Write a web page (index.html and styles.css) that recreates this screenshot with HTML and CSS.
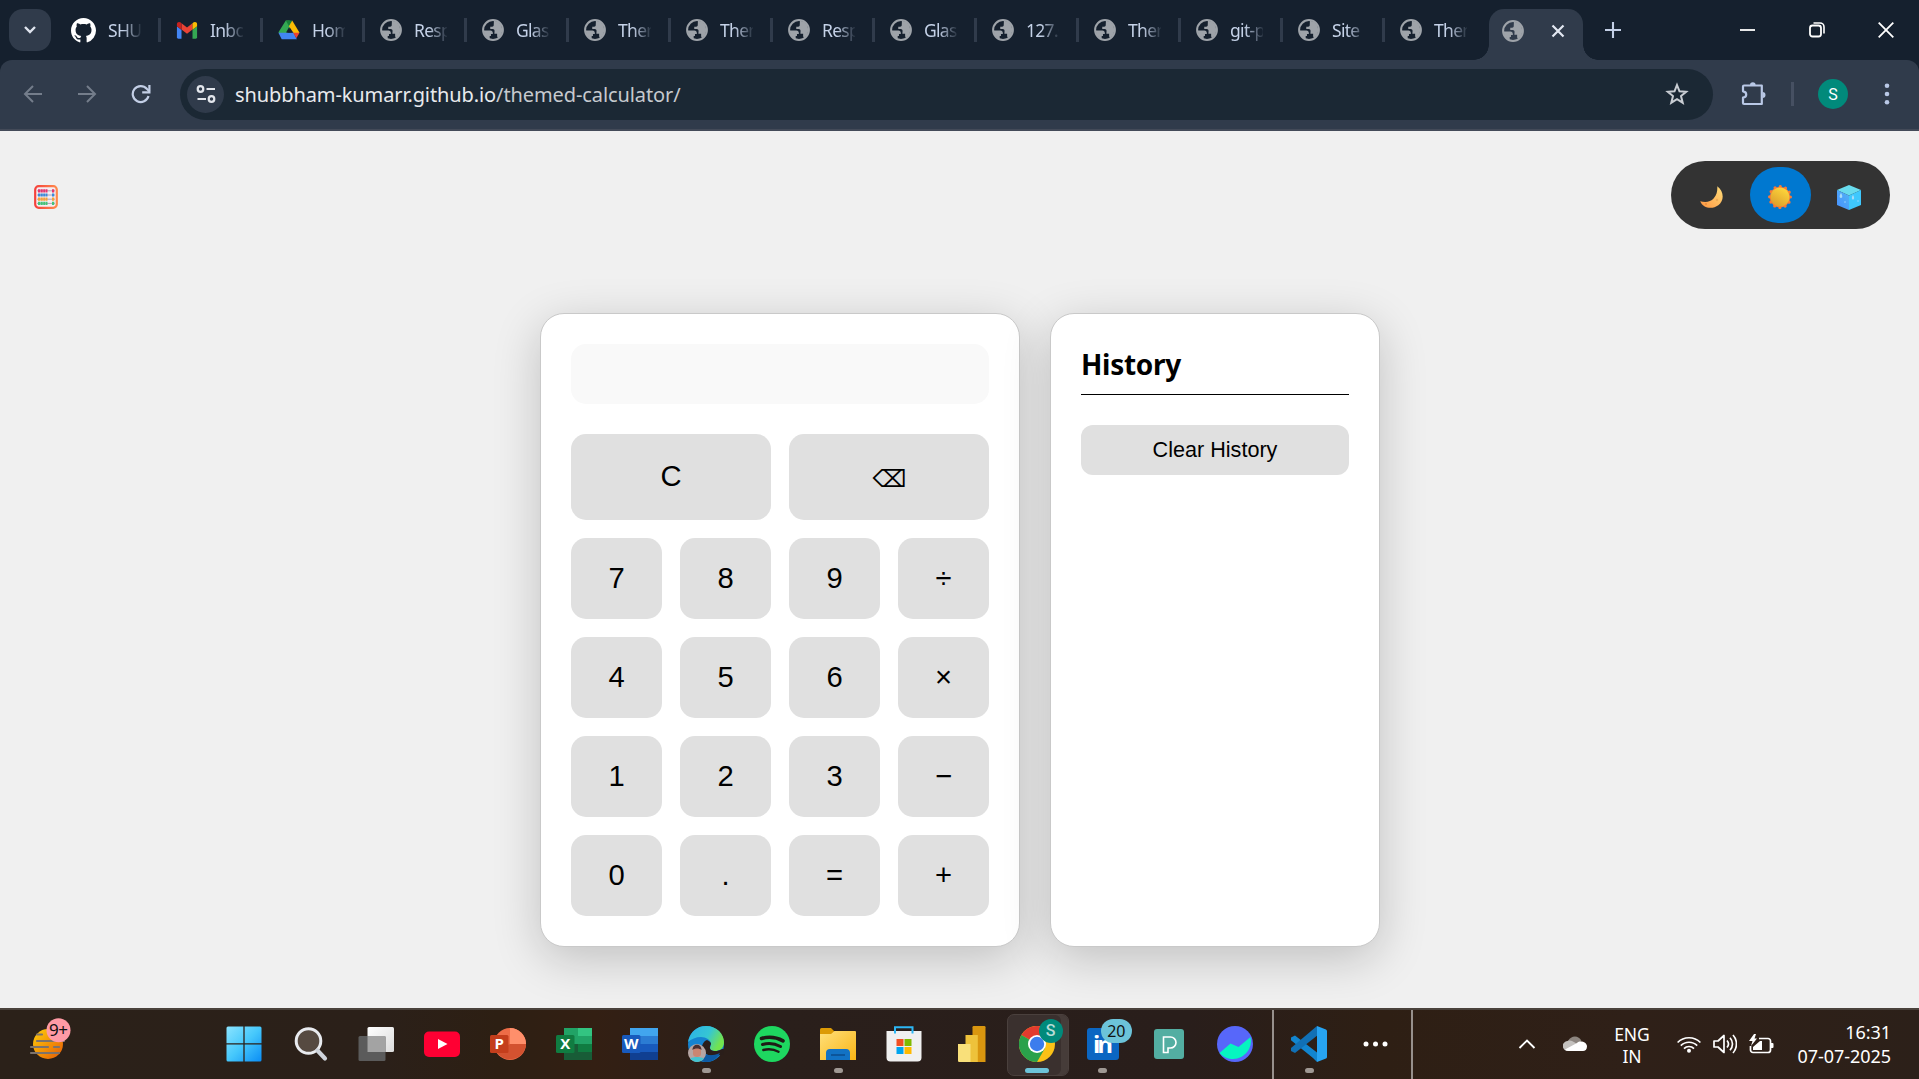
FILE: index.html
```html
<!DOCTYPE html>
<html lang="en">
<head>
<meta charset="utf-8">
<title>Themed Calculator</title>
<link rel="stylesheet" href="styles.css">
</head>
<body>
<svg class="defs" width="0" height="0" aria-hidden="true">
  <defs>
    <symbol id="globe" viewBox="0 0 24 24">
      <circle cx="12" cy="12" r="10.800" fill="none" stroke="#9ea3a9" stroke-width="2.200"/>
      <path d="M2 12.500h7.200c1.600 0 2.600 1.100 2.600 2.600v1.200h-2v2.200H8.400v3.200C4.500 20 2 16.600 2 12.500zM13 2l3.500.8C20 4.500 22 8 22 12c0 3.200-1.500 6.200-3.800 8l-1.700-.6v-3.300h-3l.2-3.100c.1-1.200-.8-2.200-2-2.200H9V8.500h2.100c1 0 1.700-.7 1.700-1.600z" fill="#9ea3a9"/>
    </symbol>
    <linearGradient id="gWin" x1="0" y1="0" x2="1" y2="1"><stop offset="0" stop-color="#8be4ff"/><stop offset=".5" stop-color="#46c8fc"/><stop offset="1" stop-color="#0a8df5"/></linearGradient>
    <linearGradient id="gMoon" x1="0" y1="1" x2="1" y2="0"><stop offset="0" stop-color="#ff9540"/><stop offset="1" stop-color="#ffdf7c"/></linearGradient>
    <linearGradient id="gSun" x1=".8" y1="0" x2=".2" y2="1"><stop offset="0" stop-color="#ffda3c"/><stop offset="1" stop-color="#dc9c2c"/></linearGradient>
    <linearGradient id="gAba" x1="0" y1="0" x2="1" y2="0"><stop offset="0" stop-color="#f5413b"/><stop offset="1" stop-color="#ff8a4d"/></linearGradient>
    <linearGradient id="gGlobe" x1="0" y1="0" x2="1" y2="1"><stop offset="0" stop-color="#ffcf0a"/><stop offset="1" stop-color="#e55a05"/></linearGradient>
    <linearGradient id="gEdge" x1="0" y1="0" x2="1" y2=".4"><stop offset="0" stop-color="#2cb0e8"/><stop offset=".6" stop-color="#35c6d4"/><stop offset="1" stop-color="#72e34f"/></linearGradient>
    <linearGradient id="gFolder" x1="0" y1="0" x2="1" y2="1"><stop offset="0" stop-color="#ffe07a"/><stop offset="1" stop-color="#f9b515"/></linearGradient>
    <linearGradient id="gPane" x1="0" y1="0" x2="1" y2="1"><stop offset="0" stop-color="#fff"/><stop offset="1" stop-color="#dcdcdc"/></linearGradient>
    <linearGradient id="gIce" x1="1" y1="0" x2="0" y2="1"><stop offset="0" stop-color="#52b4f4"/><stop offset="1" stop-color="#4690ff"/></linearGradient>
  </defs>
</svg>

<header class="browser">
  <div class="tabstrip">
    <button class="tab-search" aria-label="Search tabs"><svg width="14" height="10" viewBox="0 0 14 10"><path d="M2 2l5 5 5-5" fill="none" stroke="#dfe4ee" stroke-width="2.400"/></svg></button>
    <nav class="tabs">
      <div class="tab tab-first"><svg class="fav fav-git" viewBox="0 0 16 16"><path fill="#fff" d="M8 0C3.580 0 0 3.580 0 8c0 3.540 2.290 6.530 5.470 7.590.4.07.55-.17.55-.38 0-.19-.01-.82-.01-1.490-2.010.37-2.530-.49-2.690-.94-.09-.23-.48-.94-.82-1.130-.28-.15-.68-.52-.01-.53.63-.01 1.080.58 1.230.82.72 1.210 1.870.87 2.330.66.07-.52.28-.87.51-1.070-1.780-.2-3.640-.89-3.640-3.950 0-.87.31-1.590.82-2.150-.08-.2-.36-1.020.08-2.120 0 0 .67-.21 2.200.82.64-.18 1.320-.27 2-.27s1.360.09 2 .27c1.530-1.040 2.200-.82 2.200-.82.44 1.100.16 1.920.08 2.120.51.56.82 1.270.82 2.150 0 3.070-1.870 3.750-3.650 3.950.29.25.54.73.54 1.480 0 1.070-.01 1.930-.01 2.200 0 .21.15.46.55.38A8.010 8.010 0 0 0 16 8c0-4.420-3.580-8-8-8z"/></svg><span class="tab-title">SHUBH</span></div>
      <div class="tab"><svg class="fav" viewBox="0 0 24 24"><path fill="#4285f4" d="M1 8l5 4v9.500H2.500A1.500 1.500 0 0 1 1 20z"/><path fill="#34a853" d="M18 12l5-4v12a1.500 1.500 0 0 1-1.500 1.500H18z"/><path fill="#ea4335" d="M6 4.500l6 4.700 6-4.700v7L12 16l-6-4.500z"/><path fill="#c5221f" d="M1 5.500C1 3 4 2.300 6 4.500v7.300L1 8z"/><path fill="#fbbc04" d="M18 4.500c2-2.200 5-1.500 5 1V8l-5 3.800z"/></svg><span class="tab-title">Inbox</span></div>
      <div class="tab"><svg class="fav" viewBox="0 0 24 24"><path fill="#34a853" d="M8.500 1.500h4.200L15 6.500 6 22 .5 14.500z"/><path fill="#188038" d="M8.500 1.500h7L12 8z"/><path fill="#fbbc04" d="M15.500 1.500L23.500 15l-6 1-5.500-8z"/><path fill="#4285f4" d="M6.500 15H17l3.500 7H4L.5 15z"/><path fill="#ea4335" d="M16.500 15h7l-3.500 6z"/><path fill="#15202e" d="M12 9l3.200 5.800H8.800z"/></svg><span class="tab-title">Home</span></div>
      <div class="tab"><svg class="fav"><use href="#globe"/></svg><span class="tab-title">Responsive</span></div>
      <div class="tab"><svg class="fav"><use href="#globe"/></svg><span class="tab-title">Glass</span></div>
      <div class="tab"><svg class="fav"><use href="#globe"/></svg><span class="tab-title">Themed</span></div>
      <div class="tab"><svg class="fav"><use href="#globe"/></svg><span class="tab-title">Themed</span></div>
      <div class="tab"><svg class="fav"><use href="#globe"/></svg><span class="tab-title">Responsive</span></div>
      <div class="tab"><svg class="fav"><use href="#globe"/></svg><span class="tab-title">Glass</span></div>
      <div class="tab"><svg class="fav"><use href="#globe"/></svg><span class="tab-title">127.0</span></div>
      <div class="tab"><svg class="fav"><use href="#globe"/></svg><span class="tab-title">Themed</span></div>
      <div class="tab"><svg class="fav"><use href="#globe"/></svg><span class="tab-title">git-pages</span></div>
      <div class="tab"><svg class="fav"><use href="#globe"/></svg><span class="tab-title">Site</span></div>
      <div class="tab tab-last"><svg class="fav"><use href="#globe"/></svg><span class="tab-title">Themed</span></div>
      <div class="tab-active"><svg class="fav"><use href="#globe"/></svg><svg width="14" height="14" viewBox="0 0 14 14"><path d="M1.500 1.500l11 11M12.500 1.500l-11 11" stroke="#e3e8f2" stroke-width="2.200"/></svg></div>
    </nav>
    <svg class="newtab" width="18" height="18" viewBox="0 0 18 18"><path d="M9 1v16M1 9h16" stroke="#c3cfe6" stroke-width="2.100"/></svg>
    <div class="winctl">
      <svg width="16" height="16" viewBox="0 0 16 16"><path d="M0 8h15" stroke="#fff" stroke-width="1.800"/></svg>
      <svg width="16" height="16" viewBox="0 0 16 16"><rect x="1" y="3.500" width="11" height="11" rx="2.500" fill="none" stroke="#fff" stroke-width="1.800"/><path d="M4.500 1H11a4 4 0 0 1 4 4v6.500" fill="none" stroke="#fff" stroke-width="1.600"/></svg>
      <svg width="16" height="16" viewBox="0 0 16 16"><path d="M.7.7l14.600 14.600M15.300.7L.7 15.300" stroke="#fff" stroke-width="1.800"/></svg>
    </div>
  </div>
  <div class="toolbar">
    <div class="navbtns">
      <svg width="20" height="20" viewBox="0 0 20 20"><path d="M19 10H2.500M10 2l-8 8 8 8" fill="none" stroke="#747d8b" stroke-width="2"/></svg>
      <svg width="20" height="20" viewBox="0 0 20 20"><path d="M1 10h16.500M10 2l8 8-8 8" fill="none" stroke="#747d8b" stroke-width="2"/></svg>
      <svg width="20" height="20" viewBox="0 0 20 20"><path d="M17.500 12a8 8 0 1 1-1.700-7.200L18.500 7.500" fill="none" stroke="#c3cfe6" stroke-width="2.200"/><path d="M18.400 1v7.300h-7.200" fill="none" stroke="#c3cfe6" stroke-width="2.200"/></svg>
    </div>
    <div class="omnibox">
      <span class="siteinfo"><svg width="20" height="20" viewBox="0 0 20 20" fill="none" stroke="#e3e6ec" stroke-width="2.200"><circle cx="4.500" cy="5" r="2.800"/><path d="M10.500 5H19M1.500 15H10"/><circle cx="15.500" cy="15" r="2.800"/></svg></span>
      <span class="url"><span class="host">shubbham-kumarr.github.io</span>/themed-calculator/</span>
      <svg class="star" width="24" height="24" viewBox="0 0 24 24"><path d="M12 3l2.500 6.300 6.700.5-5.200 4.300 1.700 6.600L12 17.100l-5.700 3.600L8 14.100 2.800 9.800l6.700-.5z" fill="none" stroke="#c9cdd3" stroke-width="2"/></svg>
    </div>
    <svg class="ext" width="26" height="26" viewBox="0 0 26 26"><path d="M3.500 4.500h17.300V23H3c-.6 0-1-.4-1-1v-5.300c4.300-.5 4.300-5.900 0-6.400V5.500c0-.6.4-1 1-1z" fill="none" stroke="#b9c8e6" stroke-width="2.200" stroke-linejoin="round"/><path d="M9 4a2.800 2.800 0 0 1 5.600 0zM21.500 11a3 3 0 0 1 0 6z" fill="#b9c8e6"/></svg>
    <span class="divider"></span>
    <span class="avatar">S</span>
    <svg class="kebab" width="6" height="22" viewBox="0 0 6 22" fill="#b9c8e6"><circle cx="3" cy="2.700" r="2.300"/><circle cx="3" cy="11" r="2.300"/><circle cx="3" cy="19.300" r="2.300"/></svg>
  </div>
</header>

<main class="page">
  <div class="topbar">
    <svg class="abacus" width="24" height="24" viewBox="0 0 24 24">
      <rect x="1.200" y="1.200" width="21.600" height="21.600" rx="3.500" fill="#f4eef2" stroke="url(#gAba)" stroke-width="2.200"/>
      <g stroke="#9d93a8" stroke-width=".8"><path d="M3 5.800h18M3 10h18M3 14.200h18M3 18.400h18"/></g>
      <g stroke-width="3.200" stroke-dasharray="2.200 .4"><path stroke="#e5366e" d="M4 5.800h9.500M18 5.800h2.500"/><path stroke="#3b8ad8" d="M4 10h9.500M18 10h2.500"/><path stroke="#f5a33a" d="M4 14.200h9.500M18 14.200h2.500"/><path stroke="#43c478" d="M4 18.400h9.500M18 18.400h2.500"/></g>
    </svg>
    <div class="switcher">
      <button class="theme" aria-label="Dark"><svg width="24" height="24" viewBox="0 0 24 24"><path d="M18.300 1.200c7 5.500 7 14.500 1 19C13.500 24.500 4 23.500 1.200 16.200c5 1.600 10.200 1 13.600-2.900 3.200-3.600 3.700-7.700 3.500-12.100z" fill="url(#gMoon)"/><circle cx="7" cy="19" r="1" fill="#e88a3c"/><circle cx="18" cy="15" r="1.200" fill="#edac55"/></svg></button>
      <button class="theme theme-on" aria-label="Light"><svg width="24" height="24" viewBox="0 0 24 24"><circle cx="12" cy="12" r="10.300" fill="#fb7a35"/><circle cx="12" cy="12" r="10.400" fill="none" stroke="#fb7a35" stroke-width="3.200" stroke-linecap="round" stroke-dasharray="0 5.445"/><circle cx="12" cy="12" r="9.500" fill="url(#gSun)"/></svg></button>
      <button class="theme" aria-label="Glass"><svg width="24" height="25" viewBox="0 0 24 25"><path fill="#69dcee" d="M12 0l12 5-12 5.500L0 5z"/><path fill="url(#gIce)" d="M0 5l12 5.500V25L0 20z"/><path fill="#3fc8fd" d="M24 5l-12 5.500V25l12-5z"/><path fill="#a6dcf8" d="M4 8c1.500 2 2 5 0 5s-1.500-3 0-5zM16 10c1.500 2 1.500 4.500 0 4.500s-1.500-2.500 0-4.500z"/><g fill="#9bd7ff"><circle cx="8" cy="17" r=".8"/><circle cx="21" cy="16" r=".8"/></g></svg></button>
    </div>
  </div>
  <div class="panels">
    <section class="card calculator">
      <div class="display"></div>
      <div class="keys">
        <button class="key wide">C</button><button class="key wide erase">⌫</button>
        <button class="key">7</button><button class="key">8</button><button class="key">9</button><button class="key">÷</button>
        <button class="key">4</button><button class="key">5</button><button class="key">6</button><button class="key">×</button>
        <button class="key">1</button><button class="key">2</button><button class="key">3</button><button class="key">−</button>
        <button class="key">0</button><button class="key">.</button><button class="key">=</button><button class="key">+</button>
      </div>
    </section>
    <aside class="card history">
      <h2>History</h2>
      <button class="clear">Clear History</button>
    </aside>
  </div>
</main>

<footer class="taskbar">
  <div class="widgets"><svg width="44" height="46" viewBox="0 0 44 46"><circle cx="20" cy="28" r="15" fill="url(#gGlobe)"/><g stroke="#7d736b" stroke-width="2.200" stroke-linecap="round"><path d="M9 18.500h5M9 25h27M3 31h17M26 31h5M3 37h28"/></g><circle cx="30.500" cy="14.300" r="12" fill="#ff9aa5"/><text x="21" y="20" class="w-count" textLength="19">9+</text></svg></div>
  <div class="apps">
    <div class="app"><svg width="36" height="36" viewBox="0 0 36 36" fill="url(#gWin)"><rect x=".5" y=".5" width="35" height="35" rx="1.500"/><path d="M18 0v36M0 17.800h36" stroke="#2b2019" stroke-width="1.300"/></svg></div>
    <div class="app"><svg width="36" height="36" viewBox="0 0 36 36"><circle cx="16.500" cy="15" r="12.300" fill="#564a41" stroke="#e9ebef" stroke-width="3"/><path d="M25.500 24.500l7.500 8" stroke="#cfd4db" stroke-width="4.200" stroke-linecap="round"/></svg></div>
    <div class="app"><svg width="36" height="36" viewBox="0 0 36 36"><rect x="9.500" y="1" width="26.500" height="25" rx="1.500" fill="url(#gPane)"/><rect x=".5" y="10" width="27" height="25" rx="1.500" fill="#5b5b5b"/><path d="M9.500 10h18v16h-18z" fill="#a3a3a3"/></svg></div>
    <div class="app"><svg width="36" height="36" viewBox="0 0 36 36"><rect y="5.500" width="36" height="25.500" rx="5" fill="#ff0033"/><path d="M14 13l9.500 5-9.500 5z" fill="#fff"/></svg></div>
    <div class="app"><svg width="36" height="36" viewBox="0 0 36 36"><circle cx="20" cy="18" r="16" fill="#ed6c47"/><path d="M20 2a16 16 0 0 1 16 16H20z" fill="#ff8f6b"/><path d="M36 18a16 16 0 0 1-30 7l14-7z" fill="#d35230"/><rect y="9" width="18.500" height="18" rx="1.500" fill="#c43e1c"/><text x="9.200" y="23.300" class="office">P</text></svg></div>
    <div class="app"><svg width="36" height="36" viewBox="0 0 36 36"><path fill="#21a366" d="M8 2h14v16H8z"/><path fill="#33c481" d="M22 2h14v8H22z"/><path fill="#21a366" d="M22 10h14v8H22z"/><path fill="#107c41" d="M22 18h14v8H22z"/><path fill="#185c37" d="M8 18h14v8h14v8H8z"/><rect y="9" width="18.500" height="18" rx="1.500" fill="#107c41"/><text x="9.200" y="23.300" class="office">X</text></svg></div>
    <div class="app"><svg width="36" height="36" viewBox="0 0 36 36"><path fill="#41a5ee" d="M8 2h28v8H8z"/><path fill="#2b7cd3" d="M8 10h28v8H8z"/><path fill="#185abd" d="M8 18h28v8H8z"/><path fill="#103f91" d="M8 26h28v8H8z"/><rect y="9" width="18.500" height="18" rx="1.500" fill="#185abd"/><text x="9.200" y="23.300" class="office">W</text></svg></div>
    <div class="app running"><svg width="36" height="36" viewBox="0 0 36 36"><circle cx="18" cy="18" r="18" fill="#1583d0"/><path d="M0 16C2 6 9 0 18 0c11 0 18 8 18 16 0 7-5 9-9 9-3 0-5-1-5-3 0-1 1-2 1-4 0-4-5-7-10-7S3 13 0 16z" fill="url(#gEdge)"/><path d="M14 22c0-4 2-7 5-8 3 1 4 3 4 4-1 2-2 4 0 6 2 1 6 2 11-1h3l-2 6h-3c-5 2-18 1-18-7z" fill="#2a1e1a"/><path d="M14 20c-1 8 6 12 18 7-3 6-8 9-14 9-5 0-9-8-4-16z" fill="#0e5aa3"/><circle cx="9" cy="27" r="9" fill="#b5a5a3"/><path d="M5 24c0-5 8-5 8 0v4c0 4-8 4-8 0z" fill="#c98672"/><path d="M4.500 24c0-7 9-7 9 0-2-2-7-2-9 0z" fill="#4a2f30"/><path d="M2 32.500c4-2 10-2 14 0-4 4.500-10 4.500-14 0z" fill="#43c3d0"/></svg></div>
    <div class="app"><svg width="36" height="36" viewBox="0 0 36 36"><circle cx="18" cy="18" r="18" fill="#1ed760"/><g fill="none" stroke="#1f1b16" stroke-linecap="round"><path d="M7.500 12.500c7-2 15-1.200 21.500 2.300" stroke-width="3.600"/><path d="M8.500 18.500c6-1.800 12.500-1 18 2" stroke-width="3"/><path d="M9.300 24c5-1.300 10.500-.8 15.200 1.700" stroke-width="2.400"/></g></svg></div>
    <div class="app running"><svg width="36" height="36" viewBox="0 0 36 36"><path d="M0 3.500A1.500 1.500 0 0 1 1.500 2H11l4 4v6H0z" fill="#dc9a05"/><path d="M0 8h11l3.500-3H35a1 1 0 0 1 1 1v28H0z" fill="url(#gFolder)"/><path d="M6 34v-7a4 4 0 0 1 4-4h16a4 4 0 0 1 4 4v7z" fill="#1272c4"/><path d="M11 29h14" stroke="#0b4c8c" stroke-width="1.500"/></svg></div>
    <div class="app"><svg width="36" height="36" viewBox="0 0 36 36"><path d="M9 8V1.200h17.500V8" fill="none" stroke="#2cb7f5" stroke-width="2"/><path d="M.5 5h35v26.500a4 4 0 0 1-4 4h-27a4 4 0 0 1-4-4z" fill="#f0f0f0"/><path d="M9 5V7.500M26.500 5V7.500" stroke="#2cb7f5" stroke-width="2"/><path fill="#f25022" d="M10.500 13h7v7h-7z"/><path fill="#7fba00" d="M18.500 13h7v7h-7z"/><path fill="#00a4ef" d="M10.500 21h7v7h-7z"/><path fill="#ffb900" d="M18.500 21h7v7h-7z"/></svg></div>
    <div class="app"><svg width="36" height="36" viewBox="0 0 36 36"><path d="M19.500 1.200A1.200 1.200 0 0 1 20.700 0h10.600a1.200 1.200 0 0 1 1.200 1.200V36H19.500z" fill="#d9960f"/><path d="M12.500 9h12.300v27H12.500z" fill="#eec23b"/><path d="M5 18h12.500v18H6.200A1.200 1.200 0 0 1 5 34.800z" fill="#f9e07a"/></svg></div>
    <div class="app app-focus"><svg width="36" height="36" viewBox="0 0 36 36"><circle cx="18" cy="18" r="18" fill="#fbc116"/><path d="M18 18L2.400 9A18 18 0 0 1 33.600 9z" fill="#e33b2e"/><path d="M2.400 9A18 18 0 0 0 18 36l7.800-13.500L18 18z" fill="#2aa14b"/><circle cx="18" cy="18" r="9" fill="#fff"/><circle cx="18" cy="18" r="7.200" fill="#3b7ded"/></svg><span class="profile">S</span></div>
    <div class="app running"><svg width="32" height="32" viewBox="0 0 32 32"><rect width="32" height="32" rx="3" fill="#0b66c2"/><text x="16" y="25" class="linkedin" textLength="20">in</text></svg><span class="count">20</span></div>
    <div class="app"><svg width="30" height="30" viewBox="0 0 30 30"><rect width="30" height="30" rx="3" fill="#53aea2"/><path d="M9.500 8h7a5.500 5.500 0 0 1 0 11H14v4.500H9.500z" fill="none" stroke="#fff" stroke-width="1.600"/></svg></div>
    <div class="app"><svg width="36" height="36" viewBox="0 0 36 36"><circle cx="18" cy="18" r="18" fill="#5767fa"/><path d="M2.500 27L13.500 17.500l8 3.500 12-10A18 18 0 0 1 2.500 27z" fill="#06f5c0"/></svg></div>
  </div>
  <div class="apps apps-extra">
    <div class="app running"><svg width="36" height="36" viewBox="0 0 36 36"><path d="M4 9.500L0 11.500v2.800L22 32l4 4V26.500z" fill="#1285cf"/><path d="M4 27L0 25v-3L26 0v9.800z" fill="#1170b5"/><path d="M26 0l9 3.500a2 2 0 0 1 1 1.800v25.400a2 2 0 0 1-1 1.800L26 36z" fill="#27a4f2"/></svg></div>
    <div class="app"><svg width="26" height="6" viewBox="0 0 26 6" fill="#fff"><circle cx="3" cy="3" r="2.500"/><circle cx="12.500" cy="3" r="2.500"/><circle cx="22" cy="3" r="2.500"/></svg></div>
  </div>
  <div class="tray">
    <svg class="t-up" width="18" height="12" viewBox="0 0 18 12"><path d="M1.500 10L9 2.500l7.500 7.500" fill="none" stroke="#fff" stroke-width="1.900"/></svg>
    <svg class="t-cloud" width="24" height="18" viewBox="0 0 24 18"><path d="M5 15.500a5 5 0 0 1 0-9.500C8 0 16 0 18.500 6L12 12z" fill="#8c857f"/><path d="M5 16a5 5 0 0 1-.5-10c3-1 5 0 8 2l6 4-12 4z" fill="#c4c1be"/><path d="M2 14.500L14 8c3-3 10-1 10 3.500 0 3-2 4.500-4 4.500H6a5 5 0 0 1-4-1.500z" fill="#fff"/></svg>
    <div class="t-lang"><span>ENG</span><span>IN</span></div>
    <div class="t-icons">
      <svg width="24" height="18" viewBox="0 0 24 18" fill="none" stroke="#fff" stroke-width="1.700"><path d="M.6 7.500a16 16 0 0 1 22.800 0M3.800 10.700a11.500 11.500 0 0 1 16.400 0M7 13.600a7 7 0 0 1 10 0"/><circle cx="12" cy="15.800" r="2" fill="#fff" stroke="none"/></svg>
      <svg width="24" height="20" viewBox="0 0 24 20" fill="none" stroke="#fff" stroke-width="1.700" stroke-linejoin="round"><path d="M1 7h4l6-5.500v17L5 13H1z"/><path d="M14 6.500c1.700 2 1.700 5 0 7M17 3.700c3.300 3.700 3.300 8.900 0 12.600M20 1c4.600 5.200 4.600 12.800 0 18"/></svg>
      <svg width="25" height="20" viewBox="0 0 25 20"><path d="M10 4.500h9a2.500 2.500 0 0 1 2.500 2.500v9a2.500 2.500 0 0 1-2.500 2.500H4A2.500 2.500 0 0 1 1.500 16v-4" fill="none" stroke="#fff" stroke-width="1.700"/><path d="M22 9h1.500a1 1 0 0 1 1 1v3a1 1 0 0 1-1 1H22zM4 16v-3l7-6h2v9zM5 0L0 7h3.500L2 12l6-7.500H5.500L7 0z" fill="#fff"/></svg>
    </div>
    <div class="t-clock"><span>16:31</span><span>07-07-2025</span></div>
  </div>
</footer>
</body>
</html>
```

FILE: styles.css
```css
* { box-sizing: border-box; }
html, body { height: 100%; }
body {
  margin: 0;
  display: flex;
  flex-direction: column;
  overflow: hidden;
  background: #f0f0f0;
  font-family: "Noto Sans", "Open Sans", sans-serif;
  color: #000;
}
button { border: 0; padding: 0; background: none; font: inherit; color: inherit; }
svg { display: block; flex: none; }
.defs { position: absolute; }

/* browser window */
.browser { flex: none; height: 131px; background: #15202e; }
.tabstrip { display: flex; align-items: center; height: 60px; padding-left: 9px; }
.tab-search { width: 42px; height: 42px; border-radius: 14px; background: #303b4b; display: grid; place-items: center; }
.tabs { display: flex; align-items: flex-end; height: 60px; margin-left: 7px; }
.tab {
  display: flex;
  align-items: center;
  width: 102px;
  height: 24px;
  margin-bottom: 18px;
  padding-left: 15px;
  border-right: 3px solid #303b4b;
}
.tab-first { width: 103px; padding-left: 13px; }
.tab-last { border-color: transparent; width: 104px; }
.fav { width: 22px; height: 22px; }
.fav-git { width: 25px; height: 25px; }
.tab-title {
  width: 33px;
  margin-left: 12px;
  overflow: hidden;
  white-space: nowrap;
  font-size: 17.5px;
  line-height: 26px;
  letter-spacing: -0.7px;
  color: #c5d2e8;
  -webkit-mask-image: linear-gradient(90deg, #000 45%, transparent 105%);
  mask-image: linear-gradient(90deg, #000 45%, transparent 105%);
}
.tab-active {
  position: relative;
  display: flex;
  align-items: center;
  justify-content: space-between;
  width: 94px;
  height: 51px;
  padding: 0 18px 8px 13px;
  border-radius: 15px 15px 0 0;
  background: #303b4b;
}
.tab-active::before, .tab-active::after {
  content: "";
  position: absolute;
  bottom: 0;
  width: 15px;
  height: 15px;
}
.tab-active::before { left: -15px; background: radial-gradient(circle at 0 0, transparent 14.5px, #303b4b 15px); }
.tab-active::after { right: -15px; background: radial-gradient(circle at 100% 0, transparent 14.5px, #303b4b 15px); }
.newtab { margin-left: 21px; }
.winctl { display: flex; gap: 53px; margin-left: auto; padding-right: 25px; }
.toolbar {
  display: flex;
  align-items: center;
  height: 71px;
  padding: 0 29px 1px 23px;
  border-radius: 12px 12px 0 0;
  border-bottom: 2px solid #434a58;
  background: #303b4b;
}
.navbtns { display: flex; gap: 34px; }
.omnibox {
  display: flex;
  align-items: center;
  width: 1533px;
  height: 51px;
  margin-left: 29px;
  padding: 0 24px 0 7px;
  border-radius: 26px;
  background: #1b2834;
}
.siteinfo { display: grid; place-items: center; width: 37px; height: 37px; border-radius: 50%; background: #303b4b; }
.url { margin-left: 11px; font-size: 20px; letter-spacing: -0.1px; color: #c6cacf; }
.host { color: #e8eaed; }
.star { margin-left: auto; }
.ext { margin-left: 28px; }
.divider { width: 3px; height: 24px; margin-left: 24px; background: #465062; }
.avatar { display: grid; place-items: center; width: 30px; height: 30px; margin-left: 24px; border-radius: 50%; background: #018a7b; color: #fff; font: 16px Roboto, sans-serif; }
.kebab { margin-left: auto; }

/* page */
.page { flex: 1; min-height: 0; background: #f0f0f0; }
.topbar { display: flex; justify-content: space-between; align-items: flex-start; height: 182px; padding: 30px 29px 0 34px; }
.abacus { margin-top: 24px; }
.switcher { display: flex; gap: 8px; width: 219px; height: 68px; padding: 6px 10px; border-radius: 34px; background: #333; }
.theme { display: grid; place-items: center; width: 61px; height: 56px; padding-top: 4px; padding-right: 1px; border-radius: 28px; }
.theme-on { background: #0078d0; }
.panels { display: flex; gap: 30px; padding-left: 540px; }
.card { height: 634px; padding: 30px; border: 1px solid #c9c9c9; border-radius: 24px; background: #fff; box-shadow: 0 12px 48px rgba(0, 0, 0, 0.2); }
.calculator { width: 480px; }
.display { height: 60px; border-radius: 15px; background: #f9f9f9; }
.keys { display: grid; grid-template-columns: repeat(4, 91px); grid-template-rows: 86px repeat(4, 81px); gap: 18px; margin-top: 30px; }
.key { padding: 0 0 1px; border-radius: 15px; background: #e0e0e0; font: 29.2px "Liberation Sans", Arial, sans-serif; }
.wide { grid-column: span 2; }
.erase { padding: 4px 0 0 1px; font-family: "Liberation Sans", "DejaVu Sans", sans-serif; font-size: 24px; }
.history { width: 330px; }
.history h2 { height: 51px; margin: 0; border-bottom: 1px solid #000; font: 700 28px/40px "Noto Sans", sans-serif; letter-spacing: -0.3px; }
.clear { width: 100%; height: 50px; margin-top: 30px; border-radius: 12px; background: #e0e0e0; font: 21.6px "Liberation Sans", Arial, sans-serif; }

/* taskbar */
.taskbar {
  display: flex;
  flex: none;
  height: 71px;
  border-top: 2px solid #4a423c;
  background: linear-gradient(90deg, #2b2119 0%, #2b2019 20%, #2d1f13 26%, #331f13 31%, #2a1f1b 40%, #291e1b 62%, #2e1f14 72%, #2f2018 85%, #2c2019 100%);
}
.widgets { width: 210.5px; padding: 6px 0 0 28px; }
.w-count { font: 17px "Noto Sans", sans-serif; fill: #111; }
.apps { display: flex; align-items: flex-start; }
.app { position: relative; display: grid; place-items: center; width: 66.1px; height: 68px; }
.app.running::after, .app-focus::after {
  content: "";
  position: absolute;
  left: calc(50% - 4.5px);
  bottom: 5px;
  width: 9px;
  height: 5px;
  border-radius: 3px;
  background: #9f9893;
}
.app-focus::before { content: ""; position: absolute; left: 3px; top: 4px; width: 60px; height: 60px; border: 1px solid #4a403d; border-radius: 7px; background: #3a302e; box-shadow: inset -7px 0 0 #463c39; }
.app-focus svg { position: relative; }
.app-focus::after { left: calc(50% - 12px); width: 24px; background: #6cc3d9; }
.profile { position: absolute; left: 35px; top: 9px; width: 24px; height: 24px; border-radius: 50%; background: #018a7b; color: #b6dcd6; font: 500 16px/24px Roboto, sans-serif; text-align: center; }
.count { position: absolute; left: 31px; top: 9px; width: 31px; height: 24px; border-radius: 12px; background: #6cc3d9; color: #111; font-size: 16px; line-height: 24px; text-align: center; letter-spacing: -0.3px; }
.office { font: 700 15px "Open Sans", sans-serif; fill: #fff; text-anchor: middle; }
.linkedin { font: 700 24px "Open Sans", sans-serif; fill: #fff; text-anchor: middle; }
.apps-extra { width: 141px; margin-left: 3.9px; padding-left: 2.5px; border: solid #97908c; border-width: 0 2px; }
.tray { display: flex; align-items: center; flex: 1; padding: 0 28px 2px 105px; color: #fff; font-size: 17.5px; line-height: 22.5px; letter-spacing: -0.2px; }
.t-cloud { margin-left: 27px; }
.t-lang { display: flex; flex-direction: column; align-items: center; width: 42px; margin-left: 24px; padding-top: 3px; }
.t-icons { display: flex; align-items: center; gap: 12px; margin-left: 24px; }
.t-clock { display: flex; flex-direction: column; align-items: flex-end; margin-left: auto; font-size: 18px; line-height: 24px; letter-spacing: -0.05px; }
```
